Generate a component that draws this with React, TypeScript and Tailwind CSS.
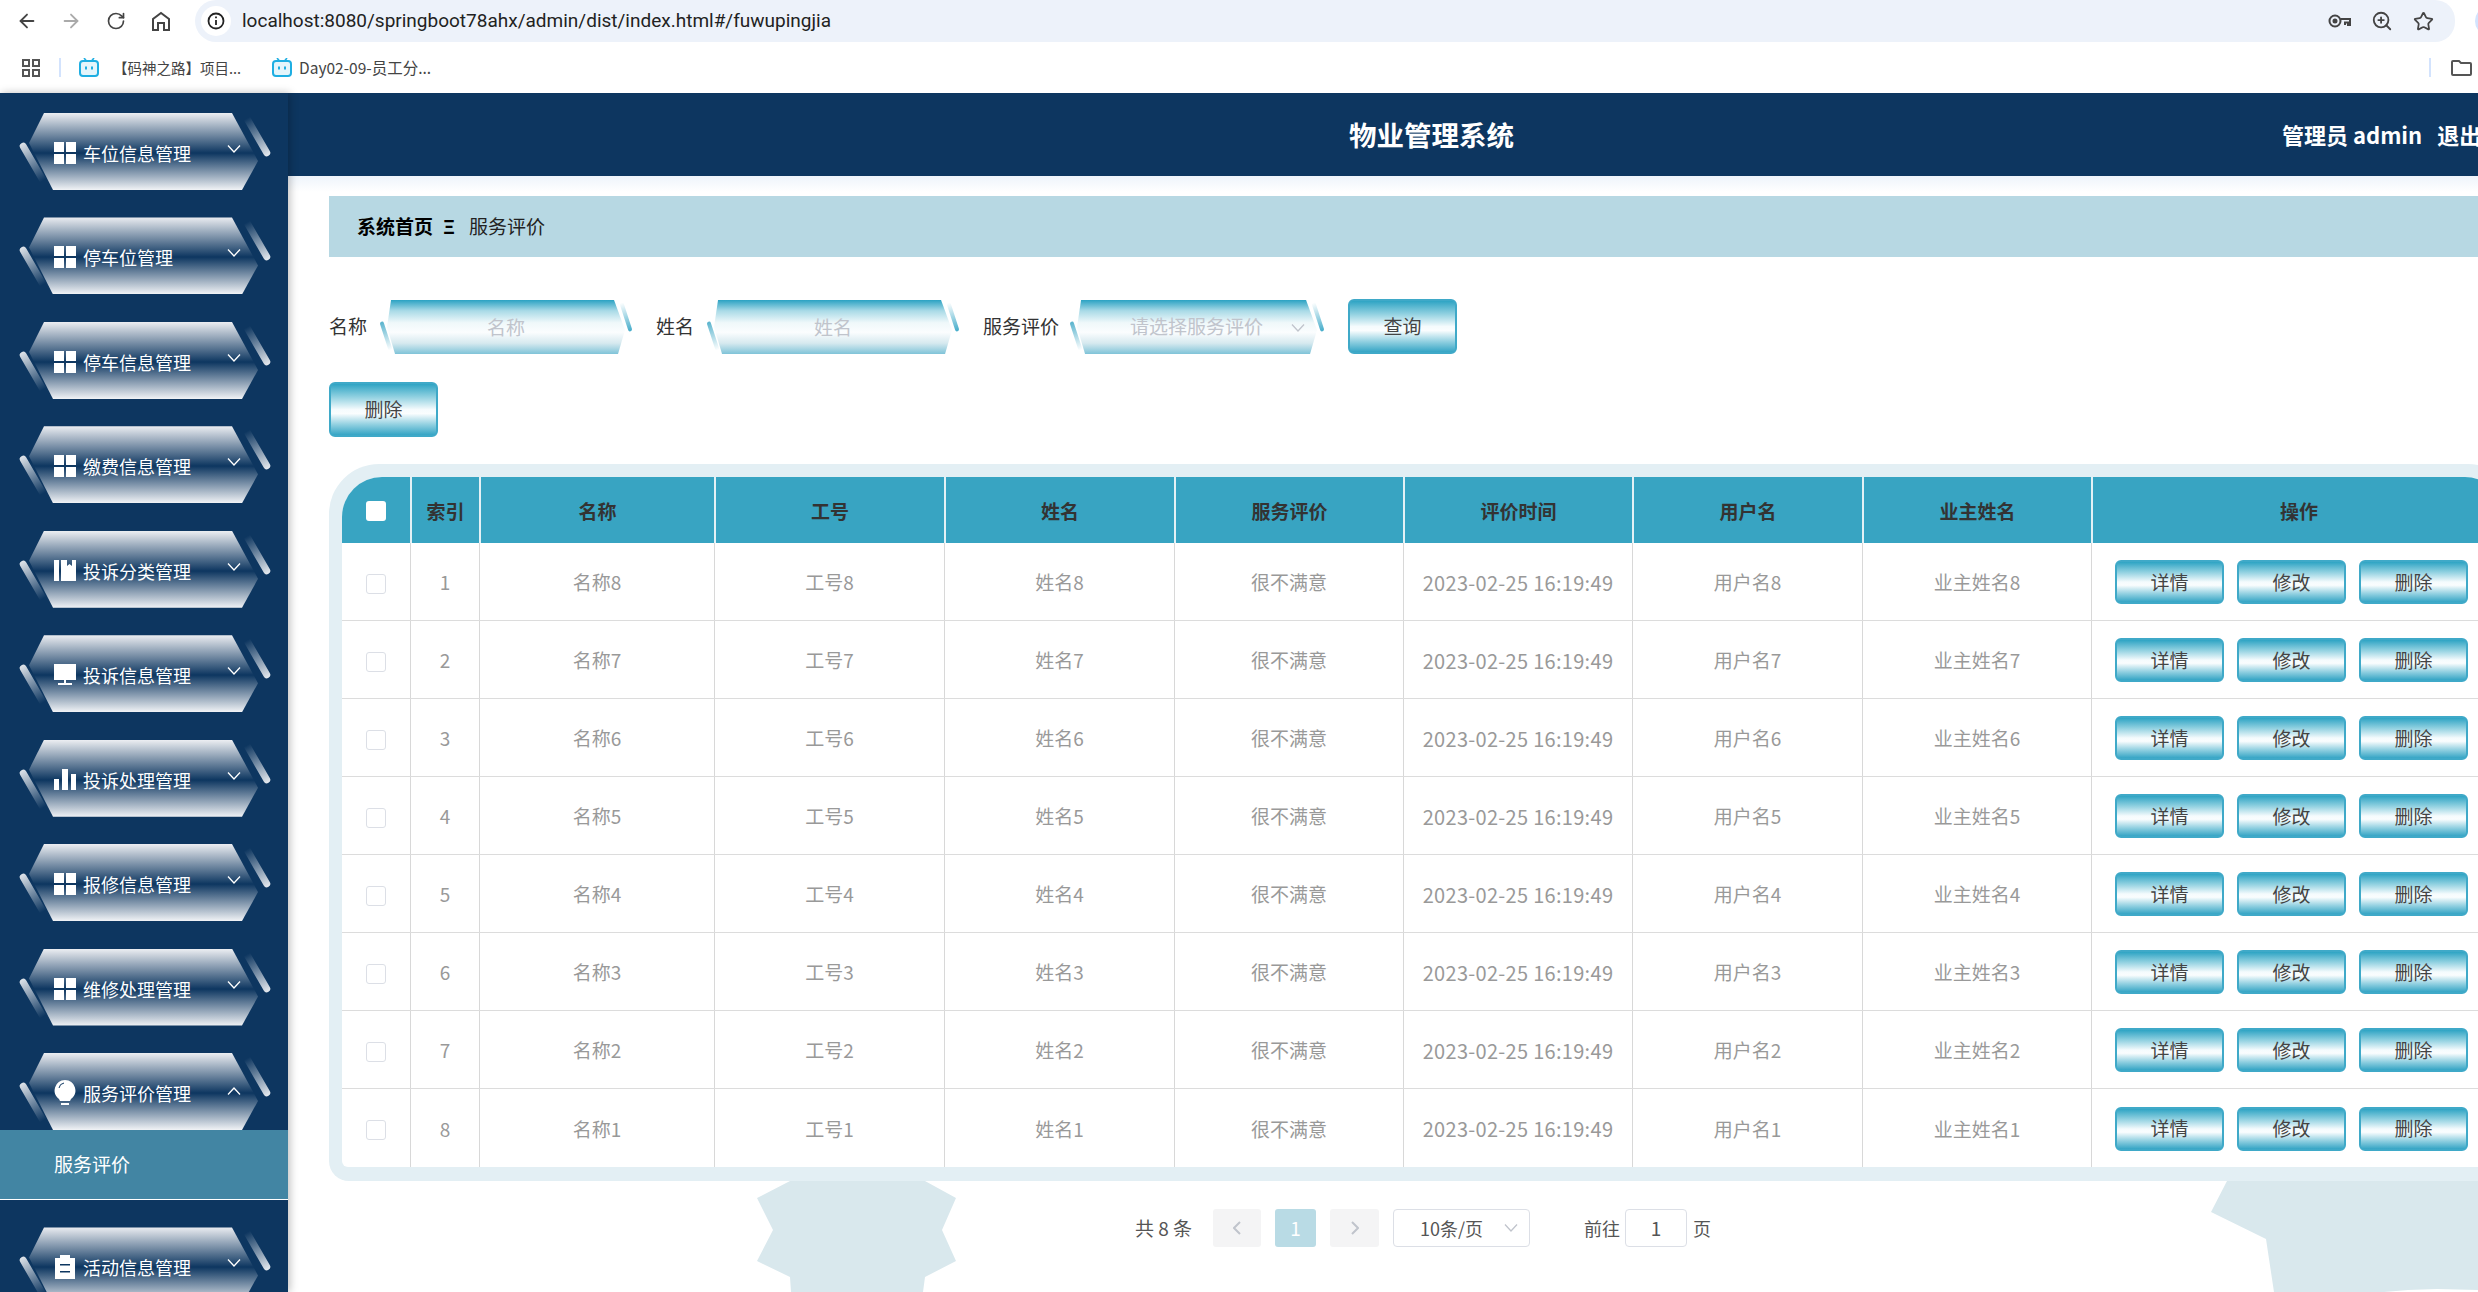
import React from 'react';
import { ArrowLeft, ArrowRight, RotateCw, Star, ZoomIn } from 'lucide-react';

const rows = [8, 7, 6, 5, 4, 3, 2, 1];
const headers = ['索引', '名称', '工号', '姓名', '服务评价', '评价时间', '用户名', '业主姓名', '操作'];
const gridCols = 'grid grid-cols-[68px_69px_235px_230px_230px_229px_229px_230px_229px_414px]';
const cell = 'flex items-center justify-center border-l border-[#d8d8d8] pt-[2px]';

const MenuIcon = () => (
  <svg width="22" height="22" viewBox="0 0 22 22" fill="#fff">
    <rect x="0" y="0" width="10" height="10" />
    <rect x="12" y="0" width="10" height="10" />
    <rect x="0" y="12" width="10" height="10" />
    <rect x="12" y="12" width="10" height="10" />
  </svg>
);

const BookIcon = () => (
  <svg width="22" height="22" viewBox="0 0 22 22" fill="#fff">
    <rect x="0" y="0" width="5" height="21" />
    <path d="M7 0h6v6l2.500-2 2.500 2V0h4v21H7z" />
  </svg>
);

const MonitorIcon = () => (
  <svg width="22" height="22" viewBox="0 0 22 22" fill="#fff">
    <rect x="0" y="0" width="22" height="16" />
    <rect x="10" y="16" width="2" height="3" />
    <rect x="4" y="19" width="14" height="2" />
  </svg>
);

const BarsIcon = () => (
  <svg width="22" height="22" viewBox="0 0 22 22" fill="#fff">
    <rect x="0" y="10" width="5" height="11" />
    <rect x="8" y="0" width="6" height="21" />
    <rect x="17" y="5" width="5" height="16" />
  </svg>
);

const BulbIcon = () => (
  <svg width="22" height="26" viewBox="0 0 22 26" fill="#fff">
    <path d="M11 0a10.500 10.500 0 0 1 6 19l-1 2H6l-1-2A10.500 10.500 0 0 1 11 0z" />
    <path d="M5 8a6 6 0 0 1 5-5" fill="none" stroke="#0d3660" strokeWidth="1" />
    <rect x="7" y="23" width="8" height="2" />
  </svg>
);

const ClipboardIcon = () => (
  <svg width="22" height="24" viewBox="0 0 22 24" fill="#fff">
    <path d="M1 3h5V0h10v3h5v21H1z" />
    <rect x="6" y="9" width="10" height="1.500" fill="#0d3660" />
    <rect x="6" y="16" width="10" height="1.500" fill="#0d3660" />
  </svg>
);

const Chevron = ({ up, color = '#fff', className = '' }: { up?: boolean; color?: string; className?: string }) => (
  <svg width="14" height="8" viewBox="0 0 14 8" fill="none" stroke={color} strokeWidth="1.300" className={className}>
    <path d={up ? 'M1 7.500 7 1l6 6.500' : 'M1 .5 7 7l6-6.500'} />
  </svg>
);

const BiliIcon = () => (
  <svg width="20" height="19" viewBox="0 0 20 19">
    <path d="M5 0l2.500 3M15 0l-2.500 3" stroke="#1eaee2" strokeWidth="1.600" />
    <rect x="1" y="3" width="18" height="15" rx="3" fill="#e4f5fb" stroke="#1eaee2" strokeWidth="2" />
    <rect x="6" y="8.500" width="2" height="3" fill="#1eaee2" />
    <rect x="12" y="8.500" width="2" height="3" fill="#1eaee2" />
  </svg>
);

const menus = [
  { label: '车位信息管理', icon: <MenuIcon /> },
  { label: '停车位管理', icon: <MenuIcon /> },
  { label: '停车信息管理', icon: <MenuIcon /> },
  { label: '缴费信息管理', icon: <MenuIcon /> },
  { label: '投诉分类管理', icon: <BookIcon /> },
  { label: '投诉信息管理', icon: <MonitorIcon /> },
  { label: '投诉处理管理', icon: <BarsIcon /> },
  { label: '报修信息管理', icon: <MenuIcon /> },
  { label: '维修处理管理', icon: <MenuIcon /> },
  { label: '服务评价管理', icon: <BulbIcon />, open: true },
  { label: '活动信息管理', icon: <ClipboardIcon /> },
];

const MenuItem = ({ label, icon, open }: { label: string; icon: React.ReactNode; open?: boolean }) => (
  <div className="shrink-0">
    <div className="relative ml-[29px] h-[77px] w-[229px]">
      <div className="absolute left-[1px] top-[27px] h-[48px] w-[7px] -rotate-[30deg] rounded-full bg-[linear-gradient(#dfe4ea,#0d3660_90%)]" />
      <div className="absolute left-[224px] top-[-2px] h-[48px] w-[7px] -rotate-[30deg] rounded-full bg-[linear-gradient(#0d3660_10%,#e6eaef)]" />
      <div className="flex h-full items-center bg-[linear-gradient(#eceef2,#0d3660_52%,#f1f3f6)] pl-[25px] pr-[17px] pt-[3px] [clip-path:polygon(15px_0,0_30px,24px_77px,213px_77px,229px_48px,203px_0)]">
        <span className="flex h-[26px] w-[22px] items-center justify-center">{icon}</span>
        <span className="ml-[7px] flex-1 text-[18px] leading-none text-white">{label}</span>
        <Chevron up={open} className={open ? '-mt-[4px]' : '-mt-[8px]'} />
      </div>
    </div>
    {open && (
      <div className="flex h-[70px] items-center border-b border-white bg-[#4285a3] pl-[54px] text-[19px] text-white">服务评价</div>
    )}
  </div>
);

const HexField = ({ children, width }: { children: React.ReactNode; width: string }) => (
  <div className={`relative mt-[1px] h-[54px] shrink-0 ${width}`}>
    <div className="absolute left-[-3px] top-[21px] h-[30px] w-[4px] -rotate-[18deg] rounded-full bg-[linear-gradient(#58b3cd,#fff)]" />
    <div className="absolute right-[-3px] top-[2px] h-[30px] w-[4px] -rotate-[18deg] rounded-full bg-[linear-gradient(#fff,#44acca)]" />
    <div className="h-full bg-[linear-gradient(#2ba2c3,#a9dae7_20%,#eff8fa_42%,#fbfdfe_60%,#d6e9ef_80%,#7fc3d8)] [clip-path:polygon(4px_0,0_27px,8px_54px,calc(100%-7px)_54px,100%_30px,calc(100%-11px)_0)]">
      {children}
    </div>
  </div>
);

const GlossButton = ({ label, size }: { label: string; size: string }) => (
  <button className={`shrink-0 rounded-[6px] border-2 border-[#3fa9c8] bg-[linear-gradient(#2fa4c4,#8fd0e0_25%,#f5fbfd_50%,#fafdfe_58%,#8fcfe0_80%,#36a5c5)] text-[#444] ${size}`}>{label}</button>
);

export default function App() {
  return (
    <div className="flex h-[1292px] w-[2478px] flex-col overflow-hidden bg-white font-['Noto_Sans_CJK_SC','Noto_Sans',sans-serif] text-[19px] text-[#333]">
      {/* browser bars */}
      <div className="flex h-[42px] shrink-0 items-center pl-[16px] text-[#444]">
        <ArrowLeft size={22} strokeWidth={2} className="shrink-0" />
        <ArrowRight size={22} strokeWidth={2} className="ml-[22px] shrink-0 text-[#aaa]" />
        <RotateCw size={20} strokeWidth={2} className="ml-[24px] shrink-0" />
        <svg width="20" height="20" viewBox="0 0 20 20" fill="none" stroke="#444" strokeWidth="2" className="ml-[25px] shrink-0">
          <path d="M2 19V8l8-6 8 6v11h-5v-7H7v7z" />
        </svg>
        <div className="ml-[24px] flex h-[42px] w-[2260px] shrink-0 items-center rounded-r-[20px] rounded-l-[21px] bg-[#edf2fa] pl-[6px]">
          <div className="flex h-[30px] w-[30px] items-center justify-center rounded-full bg-white">
            <svg width="18" height="18" viewBox="0 0 18 18" fill="none" stroke="#222" strokeWidth="1.800">
              <circle cx="9" cy="9" r="7.500" />
              <path d="M9 8v5M9 4.500v1.800" />
            </svg>
          </div>
          <span className="ml-[11px] font-['Roboto',sans-serif] text-[19px] text-[#222]">localhost:8080/springboot78ahx/admin/dist/index.html#/fuwupingjia</span>
          <div className="ml-auto mr-[21px] flex items-center gap-[20px] text-[#444]">
            <svg width="23" height="14" viewBox="0 0 23 14" fill="none" stroke="#444" strokeWidth="2">
              <circle cx="7" cy="7" r="5.500" />
              <circle cx="7" cy="7" r="1.500" fill="#444" />
              <path d="M12.500 5H22v6h-2V8.500h-3V11" />
            </svg>
            <ZoomIn size={22} strokeWidth={2} />
            <Star size={21} strokeWidth={2} />
          </div>
        </div>
        <div className="ml-[20px] h-[30px] w-[30px] shrink-0 rounded-full bg-[#d3e3fd]" />
      </div>
      <div className="flex h-[51px] shrink-0 items-center pl-[22px] text-[15px] text-[#444]">
        <svg width="18" height="18" viewBox="0 0 18 18" fill="none" stroke="#555" strokeWidth="2">
          <rect x="1" y="1" width="6" height="6" />
          <rect x="11" y="1" width="6" height="6" />
          <rect x="1" y="11" width="6" height="6" />
          <rect x="11" y="11" width="6" height="6" />
        </svg>
        <div className="ml-[19px] h-[19px] w-[2px] bg-[#d3e3fd]" />
        <span className="ml-[18px]"><BiliIcon /></span>
        <span className="ml-[14px] w-[125px] whitespace-nowrap text-[14.500px]">【码神之路】项目...</span>
        <span className="ml-[34px]"><BiliIcon /></span>
        <span className="ml-[7px] whitespace-nowrap text-[15.500px]">Day02-09-员工分...</span>
        <div className="ml-auto mr-[6px] flex items-center gap-[20px]">
          <div className="h-[19px] w-[2px] bg-[#d3e3fd]" />
          <svg width="21" height="16" viewBox="0 0 21 16" fill="none" stroke="#555" strokeWidth="2">
            <path d="M1 2a1 1 0 0 1 1-1h6l2 2h9a1 1 0 0 1 1 1v10a1 1 0 0 1-1 1H2a1 1 0 0 1-1-1z" />
          </svg>
        </div>
      </div>

      <div className="flex min-h-0 flex-1">
        {/* sidebar */}
        <aside className="z-10 flex w-[288px] shrink-0 flex-col gap-[27.44px] overflow-hidden bg-[#0d3660] pt-[20px] shadow-[2px_0_8px_rgba(0,0,0,0.25)]">
          {menus.map((m) => (
            <MenuItem key={m.label} {...m} />
          ))}
        </aside>

        <main className="flex min-w-0 flex-1 flex-col overflow-hidden">
          <header className="relative flex h-[83px] shrink-0 items-center bg-[#0d3660] font-bold text-white">
            <div className="ml-[1061px] shrink-0 whitespace-nowrap text-[27.500px]">物业管理系统</div>
            <div className="ml-[768px] flex shrink-0 items-center whitespace-nowrap text-[22px]">
              <span>管理员 admin</span>
              <span className="ml-[15px]">退出</span>
            </div>
          </header>

          <div className="min-h-0 flex-1 bg-[linear-gradient(#eef4fb,#fff_16px)] pl-[41px] pt-[20px]">
            <div className="flex h-[61px] items-center bg-[#b7d8e3] pl-[28px] text-[#222]">
              <span className="font-bold text-black">系统首页</span>
              <span className="ml-[10px] font-bold text-black">Ξ</span>
              <span className="ml-[14px]">服务评价</span>
            </div>

            <div className="mt-[42px] flex h-[55px] w-[1200px] items-center">
              <span className="mr-[20px] shrink-0">名称</span>
              <HexField width="w-[238px]">
                <input placeholder="名称" className="h-full w-full bg-transparent pb-[2px] text-center outline-none placeholder:text-[#c0c4cc]" />
              </HexField>
              <span className="ml-[31px] mr-[20px] shrink-0">姓名</span>
              <HexField width="w-[238px]">
                <input placeholder="姓名" className="h-full w-full bg-transparent pb-[2px] text-center outline-none placeholder:text-[#c0c4cc]" />
              </HexField>
              <span className="ml-[31px] mr-[18px] shrink-0">服务评价</span>
              <HexField width="w-[240px]">
                <div className="flex h-full items-center pb-[2px] pl-[53px] pr-[12px] text-[#c0c4cc]">
                  <span className="flex-1">请选择服务评价</span>
                  <Chevron color="#c0c4cc" className="mt-[4px]" />
                </div>
              </HexField>
              <GlossButton label="查询" size="ml-[31px] h-[55px] w-[109px]" />
            </div>

            <GlossButton label="删除" size="mt-[28px] block h-[55px] w-[109px]" />

            <div className="mt-[27px] w-[2189px] rounded-bl-[20px] rounded-tl-[50px] rounded-tr-[50px] bg-[#e3eff4] p-[13px] pb-[14px]">
              <div className="overflow-hidden rounded-bl-[6px] rounded-tl-[40px] rounded-tr-[40px] bg-white">
                <div className={`${gridCols} h-[66px] bg-[#38a4c2] font-bold text-[#333]`}>
                  <div className="flex items-center justify-center pt-[2px]">
                    <div className="h-[20px] w-[20px] rounded-[3px] bg-white" />
                  </div>
                  {headers.map((h) => (
                    <div key={h} className="flex items-center justify-center border-l-2 border-[#e4f1f5] pt-[3px]">{h}</div>
                  ))}
                </div>
                {rows.map((n, i) => (
                  <div key={n} className={`${gridCols} h-[78px] text-[#999] ${i < 7 ? 'border-b border-[#dcdcdc]' : ''}`}>
                    <div className="flex items-center justify-center pt-[4px]">
                      <div className="h-[20px] w-[20px] rounded-[3px] border border-[#dcdfe6] bg-white" />
                    </div>
                    <div className={cell}>{i + 1}</div>
                    <div className={cell}>名称{n}</div>
                    <div className={cell}>工号{n}</div>
                    <div className={cell}>姓名{n}</div>
                    <div className={cell}>很不满意</div>
                    <div className={`${cell} whitespace-nowrap text-[20px] tracking-[0.3px]`}>2023-02-25 16:19:49</div>
                    <div className={cell}>用户名{n}</div>
                    <div className={cell}>业主姓名{n}</div>
                    <div className="flex items-center gap-[13px] border-l border-[#d8d8d8] pl-[23px] pt-[1px]">
                      <GlossButton label="详情" size="h-[44px] w-[109px]" />
                      <GlossButton label="修改" size="h-[44px] w-[109px]" />
                      <GlossButton label="删除" size="h-[44px] w-[109px]" />
                    </div>
                  </div>
                ))}
              </div>
            </div>

            {/* pagination with the page's background shapes behind it */}
            <div className="relative h-[111px] pl-[806px] pt-[28px]">
              <svg className="absolute left-[428px] top-0" width="199" height="111" viewBox="0 0 199 111" fill="#d9e8ed">
                <path d="M33 0h135l31 17-14 32 14 31-31 16-2 15H34l-1-15L0 80l16-31L0 17z" />
              </svg>
              <svg className="absolute left-[1882px] top-0" width="267" height="111" viewBox="0 0 267 111" fill="#d9e8ed">
                <path d="M16 0h251v109l-41-1-29 1-24 2H63L55 58 0 31z" />
              </svg>
              <div className="relative flex h-[38px] items-center">
                <span className="w-[58px] whitespace-nowrap text-[19px] text-[#555]">共 8 条</span>
                <div className="ml-[20px] flex h-[38px] w-[48px] items-center justify-center rounded-[3px] bg-[#f4f4f5]">
                  <svg width="8" height="14" viewBox="0 0 8 14" fill="none" stroke="#c0c4cc" strokeWidth="2"><path d="M7 1 1 7l6 6" /></svg>
                </div>
                <div className="ml-[14px] flex h-[38px] w-[41px] items-center justify-center rounded-[3px] bg-[#b9dbe5] text-white">1</div>
                <div className="ml-[14px] flex h-[38px] w-[49px] items-center justify-center rounded-[3px] bg-[#f4f4f5]">
                  <svg width="8" height="14" viewBox="0 0 8 14" fill="none" stroke="#c0c4cc" strokeWidth="2"><path d="m1 1 6 6-6 6" /></svg>
                </div>
                <div className="ml-[14px] flex h-[38px] w-[137px] items-center rounded-[4px] border border-[#dcdfe6] bg-white pl-[26px] pr-[11px] text-[18px] text-[#555]">
                  <span className="flex-1">10条/页</span>
                  <Chevron color="#c0c4cc" />
                </div>
                <span className="ml-[54px] text-[18px] text-[#555]">前往</span>
                <div className="ml-[5px] flex h-[38px] w-[62px] items-center justify-center rounded-[4px] border border-[#dcdfe6] bg-white text-[#555]">1</div>
                <span className="ml-[6px] text-[18px] text-[#555]">页</span>
              </div>
            </div>
          </div>
        </main>
      </div>
    </div>
  );
}
